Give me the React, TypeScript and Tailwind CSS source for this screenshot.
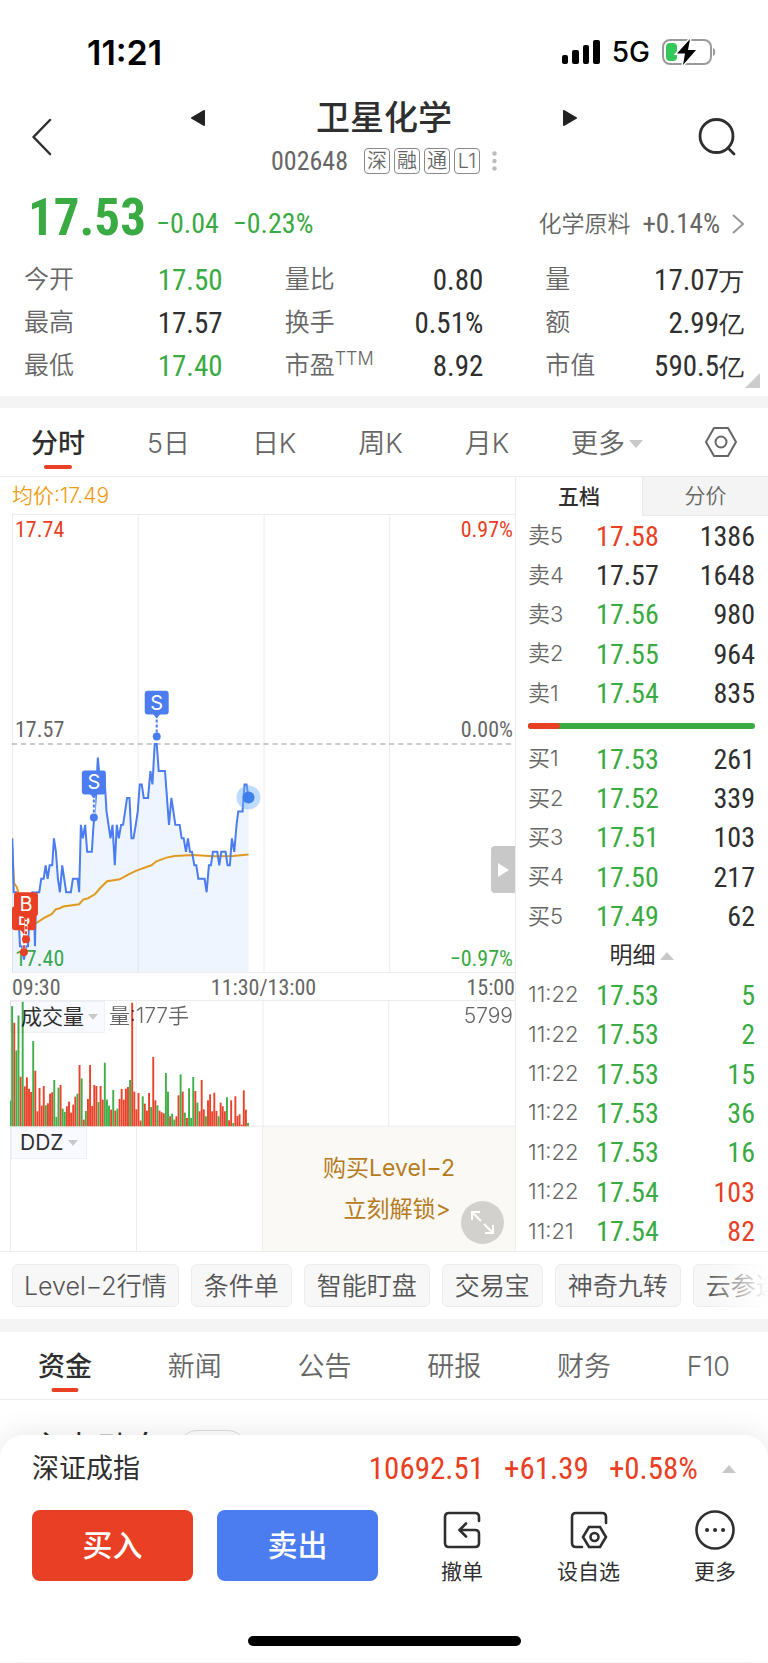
import React from 'react';
import clsx from 'clsx';

const NUM = "font-['Roboto_Condensed','Roboto',sans-serif]";
const UP = 'text-[#e93f24]';
const DOWN = 'text-[#3aaa42]';
const FLAT = 'text-[#2f2f2f]';

interface Quote {
  label: string;
  price: string;
  volume: string;
  color: string;
  volumeColor?: string;
}

const stats = [
  { label: '今开', value: '17.50', color: DOWN },
  { label: '量比', value: '0.80', color: FLAT },
  { label: '量', value: '17.07', unit: '万', color: FLAT },
  { label: '最高', value: '17.57', color: FLAT },
  { label: '换手', value: '0.51%', color: FLAT },
  { label: '额', value: '2.99', unit: '亿', color: FLAT },
  { label: '最低', value: '17.40', color: DOWN },
  { label: '市盈', sup: 'TTM', value: '8.92', color: FLAT },
  { label: '市值', value: '590.5', unit: '亿', color: FLAT },
];

const asks: Quote[] = [
  { label: '卖5', price: '17.58', volume: '1386', color: UP },
  { label: '卖4', price: '17.57', volume: '1648', color: FLAT },
  { label: '卖3', price: '17.56', volume: '980', color: DOWN },
  { label: '卖2', price: '17.55', volume: '964', color: DOWN },
  { label: '卖1', price: '17.54', volume: '835', color: DOWN },
];

const bids: Quote[] = [
  { label: '买1', price: '17.53', volume: '261', color: DOWN },
  { label: '买2', price: '17.52', volume: '339', color: DOWN },
  { label: '买3', price: '17.51', volume: '103', color: DOWN },
  { label: '买4', price: '17.50', volume: '217', color: DOWN },
  { label: '买5', price: '17.49', volume: '62', color: DOWN },
];

const trades: Quote[] = [
  { label: '11:22', price: '17.53', volume: '5', color: DOWN, volumeColor: DOWN },
  { label: '11:22', price: '17.53', volume: '2', color: DOWN, volumeColor: DOWN },
  { label: '11:22', price: '17.53', volume: '15', color: DOWN, volumeColor: DOWN },
  { label: '11:22', price: '17.53', volume: '36', color: DOWN, volumeColor: DOWN },
  { label: '11:22', price: '17.53', volume: '16', color: DOWN, volumeColor: DOWN },
  { label: '11:22', price: '17.54', volume: '103', color: DOWN, volumeColor: UP },
  { label: '11:21', price: '17.54', volume: '82', color: DOWN, volumeColor: UP },
];

// [time offset, ticks below the previous close]
const pricePoints = [
  [37, 7], [41, 11], [48, 11], [56, 13], [60, 15], [66, 15], [72, 16], [78, 15], [84, 15], [88, 13],
  [97, 11], [101, 11], [105, 15], [109, 11], [118, 11], [124, 10], [131, 10], [137, 9], [143, 10],
  [149, 9], [157, 9], [162, 7], [168, 8], [174, 10], [180, 11], [187, 9], [193, 10], [199, 11],
  [213, 11], [219, 10], [233, 10], [238, 11], [243, 6], [249, 7], [256, 6], [262, 8], [276, 8],
  [281, 6], [288, 4], [294, 1], [301, 3], [307, 3], [313, 2], [320, 5], [326, 6], [332, 7], [338, 6],
  [345, 9], [351, 6], [357, 7], [364, 6], [370, 6], [376, 5], [382, 4], [389, 4], [395, 7], [401, 7],
  [408, 6], [414, 5], [420, 3], [426, 3], [432, 4], [445, 4], [452, 2], [458, 3], [465, 0], [471, 0],
  [477, 2], [496, 2], [502, 4], [508, 6], [515, 4], [527, 6], [540, 6], [546, 7], [552, 7], [559, 8],
  [565, 7], [571, 8], [577, 8], [584, 9], [590, 9], [596, 10], [615, 10], [621, 11], [628, 9],
  [634, 9], [640, 8], [653, 8], [659, 9], [665, 8], [678, 8], [684, 9], [691, 9], [697, 7], [704, 8],
  [711, 6], [716, 5], [729, 5], [735, 3], [741, 3], [747, 4],
];

const averagePoints = [
  [37, 500], [42, 608], [50, 620], [58, 645], [80, 735], [110, 728], [135, 712], [155, 702],
  [168, 687], [180, 684], [190, 679], [238, 672], [250, 658], [265, 654], [285, 642], [300, 625],
  [322, 603], [360, 597], [385, 583], [410, 571], [455, 555], [470, 543], [500, 532], [525, 527],
  [580, 524], [640, 528], [700, 527], [747, 523],
];

// negative = falling minute
const volumes = [
  -77, -361, 311, -228, -333, 149, -374, 120, 147, 113, 103, -256, 167, 45, 115, 62, 121, -63, 69,
  98, 102, -139, -28, -116, 124, -53, -43, 60, 74, 41, 65, 89, -98, 184, -144, 20, -46, 82, 184, 61,
  124, 121, -73, 121, 80, -191, -80, -62, 50, -109, 47, -53, 82, 112, 80, 113, 118, -139, 371, 104,
  51, 100, 17, -90, 68, 47, 100, -58, 208, 78, -63, 47, 42, 39, -160, -104, 30, -38, -20, 30, 93,
  -156, 104, -41, 25, -114, -25, -148, 106, -71, 45, 139, 51, -30, 78, 96, 45, 101, 46, -30, 71, 60,
  45, -87, 18, 78, -10, 90, 31, 36, 5, 108, 50, -10,
];

const priceLine = pricePoints.map(([x, k]) => `${(x / 3 - 12).toFixed(1)},${(229.5 + k * 13.5).toFixed(1)}`).join(' ');
const averageLine = averagePoints.map(([x, y]) => `${(x / 3 - 12).toFixed(1)},${(y / 3 + 166).toFixed(1)}`).join(' ');

const Caret = ({ up, className }: { up?: boolean; className?: string }) => (
  <svg viewBox="0 0 14 8" className={clsx('shrink-0 fill-[#c8c8c8]', className)}>
    <path d={up ? 'M7 0L14 8H0z' : 'M0 0H14L7 8z'} />
  </svg>
);

const StatusBar = () => (
  <div className="flex h-[100px] items-center justify-between pt-1 pr-[52px] pl-[87px] text-black">
    <span className="text-[34px] font-semibold">11:21</span>
    <div className="flex items-center">
      <svg width="38" height="26" viewBox="0 0 38 26">
        <rect x="0" y="16" width="6" height="9" rx="2" />
        <rect x="10" y="11" width="7" height="14" rx="2" />
        <rect x="21" y="6" width="6" height="19" rx="2" />
        <rect x="31" y="1" width="7" height="24" rx="2" />
      </svg>
      <span className="ml-3 text-[28px] font-medium">5G</span>
      <svg width="54" height="28" viewBox="0 0 54 28" className="ml-3">
        <rect x="1" y="2" width="48" height="24" rx="7" fill="none" stroke="#9b9b9b" strokeWidth="2" />
        <path d="M51 10c3 1 3 7 0 8z" fill="#9b9b9b" />
        <rect x="4" y="5" width="11" height="18" rx="4" fill="#34c759" />
        <path d="M28 1L15 15.500h8L21 27 34 12h-8z" stroke="#fff" strokeWidth="3" fill="#fff" />
        <path d="M28 1L15 15.500h8L21 27 34 12h-8z" fill="#000" />
      </svg>
    </div>
  </div>
);

const Header = () => (
  <header className="flex items-center justify-between px-8">
    <button aria-label="返回" className="w-[38px]">
      <svg width="20" height="38" viewBox="0 0 20 38" fill="none" stroke="#2f2f2f" strokeWidth="2.500" strokeLinecap="round" strokeLinejoin="round">
        <path d="M18 2L1.500 19 18 36" />
      </svg>
    </button>
    <div className="w-[386px]">
      <div className="flex items-center justify-between">
        <button aria-label="上一只">
          <svg width="14" height="16" viewBox="0 0 14 16" fill="#222" stroke="#222" strokeWidth="2" strokeLinejoin="round">
            <path d="M13 1v14L1 8z" />
          </svg>
        </button>
        <h1 className="text-[34px] leading-9 font-medium text-[#2f2f2f]">卫星化学</h1>
        <button aria-label="下一只">
          <svg width="14" height="16" viewBox="0 0 14 16" fill="#222" stroke="#222" strokeWidth="2" strokeLinejoin="round">
            <path d="M1 1v14L13 8z" />
          </svg>
        </button>
      </div>
      <div className="mt-3 flex items-center justify-center gap-1 text-[#666]">
        <span className={clsx(NUM, 'mr-3 text-[26px] leading-[26px]')}>002648</span>
        {['深', '融', '通', 'L1'].map((tag) => (
          <span key={tag} className="flex h-[26px] w-[26px] items-center justify-center rounded border border-[#8a8a8a] text-[20px] leading-none font-[350]">
            {tag}
          </span>
        ))}
        <svg width="5" height="20" viewBox="0 0 5 20" fill="#bbb" className="ml-2">
          <circle cx="2.500" cy="2.500" r="2.200" />
          <circle cx="2.500" cy="10" r="2.200" />
          <circle cx="2.500" cy="17.500" r="2.200" />
        </svg>
      </div>
    </div>
    <button aria-label="搜索" className="w-[38px]">
      <svg width="38" height="40" viewBox="0 0 38 40" fill="none" stroke="#2f2f2f" strokeWidth="2.800" strokeLinecap="round">
        <circle cx="18.500" cy="19" r="16.500" />
        <path d="M30 31l6 6" />
      </svg>
    </button>
  </header>
);

const PriceSummary = () => (
  <section className="relative pb-2.5">
    <div className="flex h-[83px] items-center justify-between pr-6 pl-[28px]">
      <div className={clsx('flex items-center', NUM, DOWN)}>
        <span className="pt-1 text-[51px] leading-none font-bold">17.53</span>
        <span className="ml-2.5 pt-4 text-[28px] leading-none">−0.04</span>
        <span className="ml-3.5 pt-4 text-[28px] leading-none">−0.23%</span>
      </div>
      <a href="#sector" className="flex items-center pt-4 text-[23px] leading-7 text-[#666]">
        <span className="font-[350]">化学原料</span>
        <span className={clsx(NUM, 'ml-3 text-[27px]')}>+0.14%</span>
        <svg width="12" height="20" viewBox="0 0 12 20" fill="none" stroke="#999" strokeWidth="2" className="ml-3">
          <path d="M1 1l10 9-10 9" />
        </svg>
      </a>
    </div>
    <dl className="grid grid-cols-3 gap-x-[62px] pr-6 pl-6">
      {stats.map((s) => (
        <div key={s.label} className="flex h-[43px] items-center justify-between pt-0.5">
          <dt className="text-[25px] font-[350] text-[#666]">
            {s.label}
            {s.sup && <sup className="text-[18px] font-light">{s.sup}</sup>}
          </dt>
          <dd className={clsx('text-[29px] leading-8', NUM, s.color)}>
            {s.value}
            {s.unit && <span className="text-[25px] leading-none font-[350]">{s.unit}</span>}
          </dd>
        </div>
      ))}
    </dl>
    <svg width="15" height="15" viewBox="0 0 15 15" className="absolute right-2 bottom-2" fill="#ccc">
      <path d="M15 0v15H0z" />
    </svg>
  </section>
);

const ChartTabs = () => (
  <nav className="flex h-[69px] items-center justify-between border-b border-[#ececec] px-[31px] text-[27px] font-[350] text-[#666]">
    <button className="relative flex h-full items-center pt-1 font-medium text-[#2f2f2f]">
      分时
      <span className="absolute bottom-[7px] left-1/2 h-1 w-7 -translate-x-1/2 rounded-full bg-[#e93f24]" />
    </button>
    <button className="pt-1">5日</button>
    <button className="pt-1">日K</button>
    <button className="pt-1">周K</button>
    <button className="pt-1">月K</button>
    <button className="flex items-center gap-1 pt-1">
      更多
      <Caret className="w-3.5" />
    </button>
    <button aria-label="设置">
      <svg width="32" height="32" viewBox="0 0 32 32" fill="none" stroke="#666" strokeWidth="2" strokeLinejoin="round">
        <path d="M9 2h14l8 14-8 14H9L1 16z" />
        <circle cx="16" cy="16" r="5.500" />
      </svg>
    </button>
  </nav>
);

const Marker = ({ x, y, dotY, letter, color }: { x: number; y: number; dotY: number; letter: string; color: string }) => (
  <g>
    <path d={`M${x} ${y + 12}V${dotY}`} stroke="#fff" strokeWidth="3" />
    <path d={`M${x} ${y + 12}V${dotY}`} stroke={color} strokeWidth="2" strokeDasharray="3 2" />
    <circle cx={x} cy={dotY} r="4" fill={color} />
    <rect x={x - 12} y={y - 12} width="24" height="24" rx="3" fill={color} />
    <path d={`M${x - 4} ${y + 11}h8l-4 5z`} fill={color} />
    <text x={x} y={y + 7} fontSize="20" fill="#fff" textAnchor="middle" fontFamily="Inter">{letter}</text>
  </g>
);

const PriceChart = () => (
  <div className={clsx('relative ml-3 border-t border-[#ececec]', NUM)}>
    <div className="absolute inset-0 text-[22px] leading-6">
      <span className={clsx('absolute top-[3px] left-[3px]', UP)}>17.74</span>
      <span className={clsx('absolute top-[3px] right-0.5', UP)}>0.97%</span>
      <span className="absolute top-[203px] left-[3px] text-[#666]">17.57</span>
      <span className="absolute top-[203px] right-0.5 text-[#666]">0.00%</span>
      <span className={clsx('absolute bottom-[2px] left-[3px]', DOWN)}>17.40</span>
      <span className={clsx('absolute right-0.5 bottom-[2px]', DOWN)}>−0.97%</span>
    </div>
    <svg viewBox="0 0 504 459" className="relative block w-full" fill="none">
      <path d="M.5 0V458M126.500 0V458M252.500 0V458M378.500 0V458M0 458.500H504" stroke="#ececec" />
      <path d="M0 229.500H504" stroke="#bbb" strokeWidth="1.500" strokeDasharray="5 4" />
      <polygon points={`0,458 ${priceLine} 237,458`} fill="#4b93f0" fillOpacity="0.09" />
      <polyline points={averageLine} stroke="#e09a20" strokeWidth="2" />
      <polyline points={priceLine} stroke="#4b7cf0" strokeWidth="2" />
      <circle cx="237" cy="283" r="12" fill="#6fb1ff" fillOpacity="0.45" />
      <circle cx="237" cy="283" r="6" fill="#3f7fea" />
      <Marker x={82} y={268} dotY={303} letter="S" color="#4b7cf0" />
      <Marker x={145} y={188} dotY={222} letter="S" color="#4b7cf0" />
      <Marker x={12} y={404} dotY={438} letter="B" color="#e93f24" />
      <Marker x={14} y={390} dotY={425} letter="B" color="#e93f24" />
    </svg>
    <button aria-label="展开" className="absolute right-0 bottom-[80px] flex h-[47px] w-6 items-center justify-center rounded-l bg-[#c8c8c8]">
      <svg width="11" height="14" viewBox="0 0 11 14" fill="#fff">
        <path d="M0 0l11 7-11 7z" />
      </svg>
    </button>
  </div>
);

const VolumeChart = () => (
  <div className="relative ml-2.5 border-t border-[#ececec]">
    <svg viewBox="0 0 506 126" className="block w-full">
      <path d="M.5 0V126M126.500 0V126M253.500 0V126M379.500 0V126M0 125.500H506" stroke="#ececec" />
      {volumes.map((v, i) => (
        <rect key={i} x={i * 2.11 - 0.9} y={125.5 - Math.abs(v) / 3} width="1.900" height={Math.abs(v) / 3} fill={v < 0 ? '#3fae47' : '#e8432a'} />
      ))}
    </svg>
    <div className="absolute inset-x-0 top-0 flex items-start text-[21px] leading-[30px] font-[350] text-[#666] mix-blend-multiply">
      <button className="flex items-center gap-1 border border-[#edf1f6] bg-[#f8faff] pr-1.5 pl-2.5 font-normal text-[#2f2f2f]">
        成交量
        <Caret className="w-2.5" />
      </button>
      <span className="ml-1">量:177手</span>
      <span className="mr-0.5 ml-auto">5799</span>
    </div>
  </div>
);

const DdzPanel = () => (
  <div className="ml-2.5 grid h-[124px] grid-cols-[126fr_127fr_253fr] border-l border-[#ececec]">
    <div className="border-r border-[#ececec]">
      <button className="flex items-center gap-1 border border-[#edf1f6] bg-[#f8faff] pr-2 pl-2 text-[21px] leading-[30px] text-[#2f2f2f]">
        DDZ
        <Caret className="w-2.5" />
      </button>
    </div>
    <div className="border-r border-[#ececec]" />
    <div className="relative bg-[#fbf9f5] pt-[21px] text-center text-[23px] leading-[41px] text-[#b67c1e]">
      <a href="#level2" className="block">
        购买Level−2
        <span className="block pl-4">立刻解锁&gt;</span>
      </a>
      <button aria-label="全屏" className="absolute right-[11px] bottom-[7px] flex h-[43px] w-[43px] items-center justify-center rounded-full bg-[#d3d1ce]">
        <svg width="23" height="23" viewBox="0 0 23 23" fill="none" stroke="#fff" strokeWidth="2">
          <path d="M1 9V1h8M1 1l9 9M22 14v8h-8M22 22l-9-9" />
        </svg>
      </button>
    </div>
  </div>
);

const QuoteRow = ({ row }: { row: Quote }) => (
  <tr>
    <th scope="row" className="p-0 text-left text-[22px] font-[350] text-[#666]">{row.label}</th>
    <td className={clsx('p-0 pt-0.5 text-[28px] leading-8', NUM, row.color)}>{row.price}</td>
    <td className={clsx('p-0 pt-0.5 text-right text-[28px] leading-8', NUM, row.volumeColor ?? FLAT)}>{row.volume}</td>
  </tr>
);

const QuoteTable = ({ rows, className }: { rows: Quote[]; className: string }) => (
  <table className={clsx('w-full table-fixed', className)}>
    <colgroup>
      <col className="w-[30%]" />
      <col className="w-[34%]" />
      <col className="w-[36%]" />
    </colgroup>
    <tbody>
      {rows.map((row, i) => (
        <QuoteRow key={i} row={row} />
      ))}
    </tbody>
  </table>
);

const OrderBook = () => (
  <aside className="flex flex-col border-l border-[#ececec]">
    <div className="grid h-[39px] grid-cols-2 text-[21px]">
      <button className="font-medium text-[#2f2f2f]">五档</button>
      <button className="border-b border-l border-[#e8e8e8] bg-[#f4f4f4] font-[350] text-[#666]">分价</button>
    </div>
    <div className="pr-[13px] pl-3">
      <QuoteTable rows={asks} className="h-[197px]" />
      <div className="flex h-[26px] items-center">
        <div className="h-1.5 w-full overflow-hidden rounded-full bg-[#3aaa42]">
          <div className="h-full w-[14%] rounded-r-full bg-[#e93f24]" />
        </div>
      </div>
      <QuoteTable rows={bids} className="h-[197px]" />
      <button className="flex h-[39px] w-full items-center justify-center gap-1 text-[23px] text-[#2f2f2f]">
        明细
        <Caret up className="w-3.5" />
      </button>
      <QuoteTable rows={trades} className="h-[276px]" />
    </div>
  </aside>
);

const Shortcuts = () => (
  <div className="relative flex gap-3 overflow-hidden py-3 pl-3">
    {['Level−2行情', '条件单', '智能盯盘', '交易宝', '神奇九转', '云参选股'].map((name) => (
      <button key={name} className="h-[43px] shrink-0 rounded-md border border-[#ececec] bg-[#f7f7f7] px-[11px] pt-0.5 text-[25px] leading-none font-[350] text-[#555] not-first:px-3">
        {name}
      </button>
    ))}
    <div className="absolute inset-y-0 right-0 w-[60px] bg-linear-to-r from-white/0 to-white" />
  </div>
);

const InfoTabs = () => (
  <nav className="flex h-[68px] items-center justify-between border-b border-[#ececec] px-[38px] text-[27px] font-[350] text-[#666]">
    <button className="relative flex h-full items-center pt-1 font-medium text-[#2f2f2f]">
      资金
      <span className="absolute bottom-[7px] left-1/2 h-1 w-[27px] -translate-x-1/2 rounded-full bg-[#e93f24]" />
    </button>
    {['新闻', '公告', '研报', '财务', 'F10'].map((name) => (
      <button key={name} className="pt-1">{name}</button>
    ))}
  </nav>
);

const actionIcon = 'h-10 w-10 fill-none stroke-[#2f2f2f] stroke-[2.6]';

const TradeBar = () => (
  <footer className="relative rounded-t-[24px] bg-white px-8 pb-4 shadow-[0_0_30px_rgba(0,0,0,0.10)]">
    <div className="flex h-[68px] items-center text-[27px]">
      <span className="text-[#2f2f2f]">深证成指</span>
      <div className={clsx('ml-auto flex gap-5 text-[31px]', NUM, UP)}>
        <span>10692.51</span>
        <span>+61.39</span>
        <span>+0.58%</span>
      </div>
      <Caret up className="ml-6 w-3.5" />
    </div>
    <div className="mt-[7px] flex items-start">
      <button className="h-[71px] w-[161px] rounded-lg bg-[#e93f24] text-[30px] font-medium text-white">买入</button>
      <button className="ml-6 h-[71px] w-[161px] rounded-lg bg-[#4b7cf0] text-[30px] font-medium text-white">卖出</button>
      <div className="flex flex-1 justify-between pl-[63px] text-[21px] leading-6 text-[#2f2f2f]">
        <button className="flex flex-col items-center gap-2.5">
          <svg viewBox="0 0 40 40" className={actionIcon} strokeLinecap="round">
            <path d="M37 11V7q0-4-4-4H7Q3 3 3 7v26q0 4 4 4h26q4 0 4-4V24q0-4-4-4H18M24 13.500L17.500 20 24 26.500" />
          </svg>
          撤单
        </button>
        <button className="flex flex-col items-center gap-2.5">
          <svg viewBox="0 0 40 40" className={actionIcon} strokeLinecap="round">
            <path d="M37 13V7q0-4-4-4H7Q3 3 3 7v26q0 4 4 4h6M20 17h11l6 10-6 10H20l-6-10z" />
            <circle cx="25.500" cy="27" r="4" />
          </svg>
          设自选
        </button>
        <button className="flex flex-col items-center gap-2.5">
          <svg viewBox="0 0 40 40" className={actionIcon}>
            <circle cx="20" cy="20" r="18.500" />
            <path d="M12 20h.1M20 20h.1M28 20h.1" strokeWidth="4" strokeLinecap="round" />
          </svg>
          更多
        </button>
      </div>
    </div>
    <div className="mx-auto mt-[52px] h-2.5 w-[273px] rounded-full bg-black" />
  </footer>
);

export default function App() {
  return (
    <div className="min-h-screen overflow-hidden bg-white font-['Inter','Noto_Sans_CJK_SC',sans-serif]">
      <StatusBar />
      <Header />
      <PriceSummary />
      <div className="h-3 bg-[#f4f4f4]" />
      <ChartTabs />
      <main className="grid grid-cols-[515fr_253fr] border-b border-[#ececec]">
        <div>
          <div className="h-[37px] pl-3 text-[21px] leading-[38px] font-[350] text-[#ef9c12]">均价:17.49</div>
          <PriceChart />
          <div className={clsx('flex h-[27px] items-center justify-between pt-0.5 pl-3 text-[22px] text-[#666]', NUM)}>
            <span>09:30</span>
            <span>11:30/13:00</span>
            <span>15:00</span>
          </div>
          <VolumeChart />
          <DdzPanel />
        </div>
        <OrderBook />
      </main>
      <Shortcuts />
      <div className="h-[13px] bg-[#f4f4f4]" />
      <InfoTabs />
      <div className="flex h-[35px] items-start overflow-hidden pt-[30px] pl-[31px] text-[33px] leading-9 text-[#2f2f2f]">
        <span>主力动向</span>
        <span className="ml-4 h-9 w-[67px] rounded-full border border-[#ddd]" />
      </div>
      <TradeBar />
    </div>
  );
}
